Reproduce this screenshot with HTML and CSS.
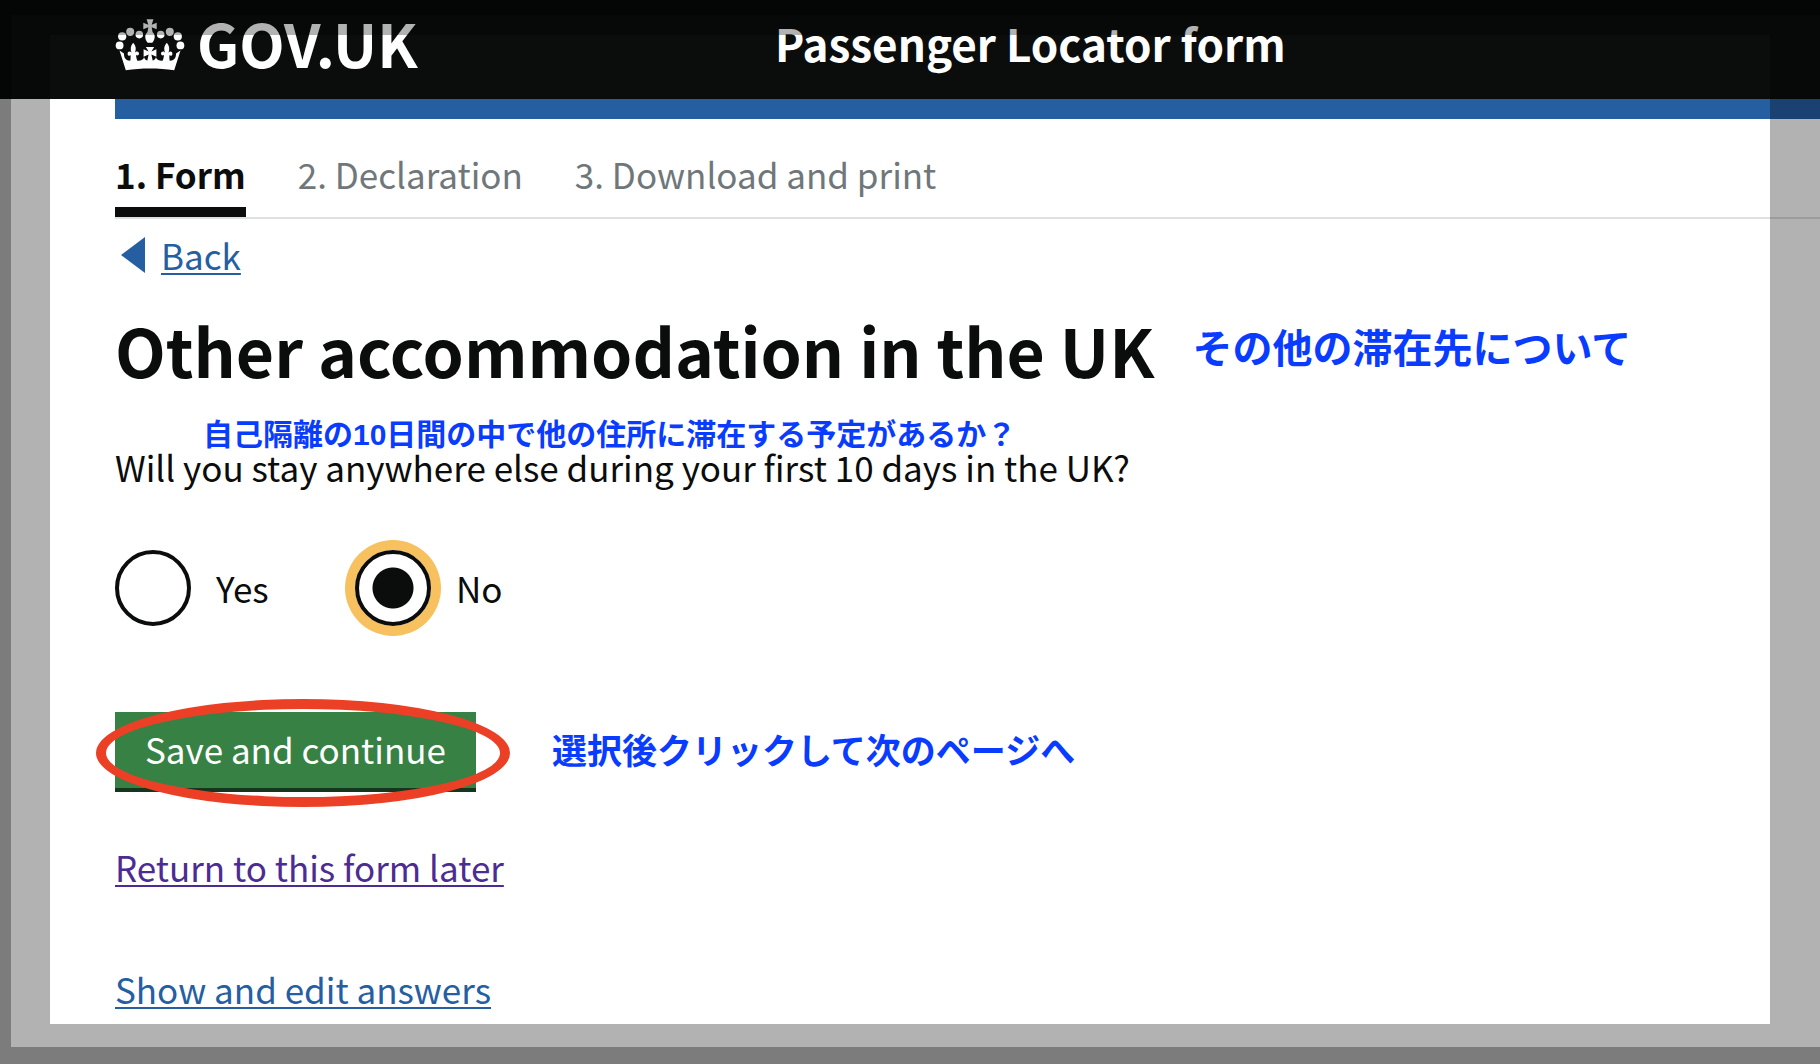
FILE: index.html
```
<!DOCTYPE html>
<html lang="en">
<head>
<meta charset="UTF-8">
<title>Passenger Locator form</title>
<link rel="stylesheet" href="styles.css">
</head>
<body>
	<header class="header">
		<a class="header-logo" href="#">
			<svg class="crown" viewBox="0 0 68 52" aria-hidden="true">
				<g fill="#fff">
					<circle cx="3.6" cy="26.4" r="3.9" />
					<circle cx="6.2" cy="17.4" r="4.1" />
					<circle cx="14.2" cy="12.8" r="4" />
					<circle cx="23.3" cy="15.6" r="3.8" />
					<circle cx="44.7" cy="15.6" r="3.8" />
					<circle cx="53.8" cy="12.8" r="4" />
					<circle cx="61.8" cy="17.4" r="4.1" />
					<circle cx="64.4" cy="26.4" r="3.9" />
					<!-- orb and cross -->
					<path d="M30.6.3h6.8l-1.700 5.400 5-1.900v6.400l-5-2 .8 4.800c3.500 3 2.500 7.500-.2 10.800h-4.600c-2.700-3.300-3.700-7.800-.2-10.800l.8-4.800-5 2v-6.400l5 1.900z" />
					<!-- band -->
					<path d="M3.500 31.500 8 34.500c-.2 4.500 2 7.200 6 7.200h8c3.500 0 5.500-1.200 6-3.400 1 2.200 2 3 3.700 3.400h4.600c1.700-.4 2.700-1.200 3.700-3.400.5 2.200 2.500 3.400 6 3.400h8c4 0 6.200-2.700 6-7.200l4.500-3-6.300 19.700c-16-2.300-32.400-2.300-48.400 0z" />
					<!-- fleurs -->
					<path d="M17.200 23.700c3 3.500 3.200 6.800 1.600 10 1.200-2 4.200-1.500 4.200.9 0 2-2 2.400-3 1.500.2 2.500.7 4.500 2 6.900h-8c.6-2.400.8-4.400.5-6.900-1 1.200-2.900.6-2.900-1.200 0-2.500 2.500-3 4-1.200-1.600-3.500-1-7 1.600-10z" />
					<path d="M50.800 23.700c-3 3.500-3.200 6.800-1.600 10-1.200-2-4.200-1.500-4.200.9 0 2 2 2.400 3 1.500-.2 2.500-.7 4.500-2 6.900h8c-.6-2.400-.8-4.400-.5-6.900 1 1.200 2.900.6 2.900-1.200 0-2.500-2.500-3-4-1.200 1.600-3.500 1-7-1.600-10z" />
					<path d="M29.800 28h8.400l-2.800 4.600 5-2.300v7.400l-5-2.300 1.600 7.600h-6l1.600-7.600-5 2.300v-7.400l5 2.300z" />
				</g>
			</svg>
			<span>GOV.UK</span>
		</a>
		<span class="header-title">Passenger Locator form</span>
	</header>

	<div class="container">
		<div class="blue-bar"></div>
		<nav class="steps">
			<a class="step active" href="#">1. Form</a>
			<a class="step" href="#">2. Declaration</a>
			<a class="step" href="#">3. Download and print</a>
		</nav>
		<a class="back" href="#">Back</a>

		<main>
			<div class="heading">
				<h1>Other accommodation in the UK</h1>
				<span class="note note-large" lang="ja">その他の滞在先について</span>
			</div>
			<form>
				<p class="note note-small" lang="ja">自己隔離の10日間の中で他の住所に滞在する予定があるか？</p>
				<fieldset>
					<legend>Will you stay anywhere else during your first 10 days in the UK?</legend>
					<div class="radios">
						<div class="radio">
							<input type="radio" id="stay-yes" name="stay" value="yes">
							<label for="stay-yes">Yes</label>
						</div>
						<div class="radio">
							<input type="radio" id="stay-no" name="stay" value="no" checked>
							<label for="stay-no">No</label>
						</div>
					</div>
				</fieldset>
				<div class="actions">
					<div class="button-wrap">
						<button type="button">Save and continue</button>
						<div class="ring"></div>
					</div>
					<span class="note note-medium" lang="ja">選択後クリックして次のページへ</span>
				</div>
			</form>
			<p class="link-row"><a class="visited" href="#">Return to this form later</a></p>
			<p class="link-row"><a href="#">Show and edit answers</a></p>
		</main>
	</div>

	<div class="shade shade-outer"></div>
	<div class="shade shade-inner"></div>
</body>
</html>
```
FILE: styles.css
```
* {
	box-sizing: border-box;
}

body {
	margin: 0;
	overflow: hidden;
	background: #fff;
	color: #0b0c0c;
	font-family: "Noto Sans CJK JP", sans-serif;
	font-size: 35px;
	line-height: 50px;
}

a {
	color: #265ea2;
	text-decoration-thickness: 2px;
	text-underline-offset: 3px;
}

/* header */
.header {
	display: grid;
	grid-template-columns: 660px 1fr;
	align-items: center;
	height: 99px;
	padding: 0 0 14px 115px;
	background: #0b0c0c;
	color: #fff;
	font-weight: bold;
}

.header-logo {
	display: flex;
	align-items: center;
	gap: 12px;
	color: #fff;
	font-size: 59px;
	text-decoration: none;
}

.crown {
	width: 70px;
	height: 52px;
	margin-top: 4px;
}

.header-title {
	font-size: 44px;
}

.container {
	margin-left: 115px;
}

.blue-bar {
	height: 20px;
	background: #265ea2;
}

/* step navigation */
.steps {
	display: flex;
	gap: 52px;
	border-bottom: 2px solid #dee0e2;
}

.step {
	padding: 30px 0 8px;
	border-bottom: 10px solid transparent;
	color: #6f777b;
	text-decoration: none;
}

.step.active {
	border-color: #0b0c0c;
	color: #0b0c0c;
	font-weight: bold;
}

.back {
	display: inline-flex;
	align-items: center;
	gap: 16px;
	margin: 11px 0 0 6px;
}

.back::before {
	content: "";
	border: solid transparent;
	border-width: 18px 24px 18px 0;
	border-right-color: #265ea2;
}

/* content */
.heading {
	display: flex;
	align-items: center;
	gap: 38px;
	margin-top: 24px;
}

h1 {
	margin: 0;
	font-size: 66px;
	line-height: 84px;
}

.note {
	margin: 0;
	color: #0a3cff;
	font-family: "Liberation Sans", "Noto Sans CJK JP", sans-serif;
	font-weight: bold;
}

.note-large {
	font-size: 40px;
}

.note-medium {
	font-size: 35px;
}

.note-small {
	margin: 29px 0 1px 88px;
	font-size: 30px;
	line-height: 30px;
}

fieldset {
	margin: 0;
	padding: 0;
	border: 0;
}

legend {
	padding: 0;
	line-height: 32px;
}

.radios {
	display: flex;
	margin-top: 67px;
}

.radio {
	display: flex;
	align-items: center;
	gap: 25px;
	width: 240px;
}

.radio input {
	appearance: none;
	width: 76px;
	height: 76px;
	margin: 0;
	border: 4px solid #0b0c0c;
	border-radius: 50%;
}

.radio input:checked {
	background: radial-gradient(circle, #0b0c0c 20px, transparent 21px);
	box-shadow: 0 0 0 10px #f7c15f;
}

.actions {
	display: flex;
	align-items: center;
	gap: 76px;
	margin-top: 86px;
}

.button-wrap {
	position: relative;
}

button {
	display: block;
	padding: 12px 30px 14px;
	border: 0;
	border-bottom: 4px solid #14361c;
	background: #388144;
	color: #fff;
	font: inherit;
}

.ring {
	position: absolute;
	inset: -13px -34px -15px -19px;
	border: 10px solid #eb4026;
	border-radius: 50%;
	pointer-events: none;
}

.link-row {
	margin: 50px 0 72px;
}

.visited {
	color: #4c2c92;
}

/* dimmed frames round the window */
.shade {
	position: fixed;
	box-shadow: 0 0 0 200px rgba(0, 0, 0, 0.3);
	pointer-events: none;
}

.shade-outer {
	inset: 15px 0 17px 11px;
}

.shade-inner {
	inset: 35px 50px 40px 50px;
}
```
